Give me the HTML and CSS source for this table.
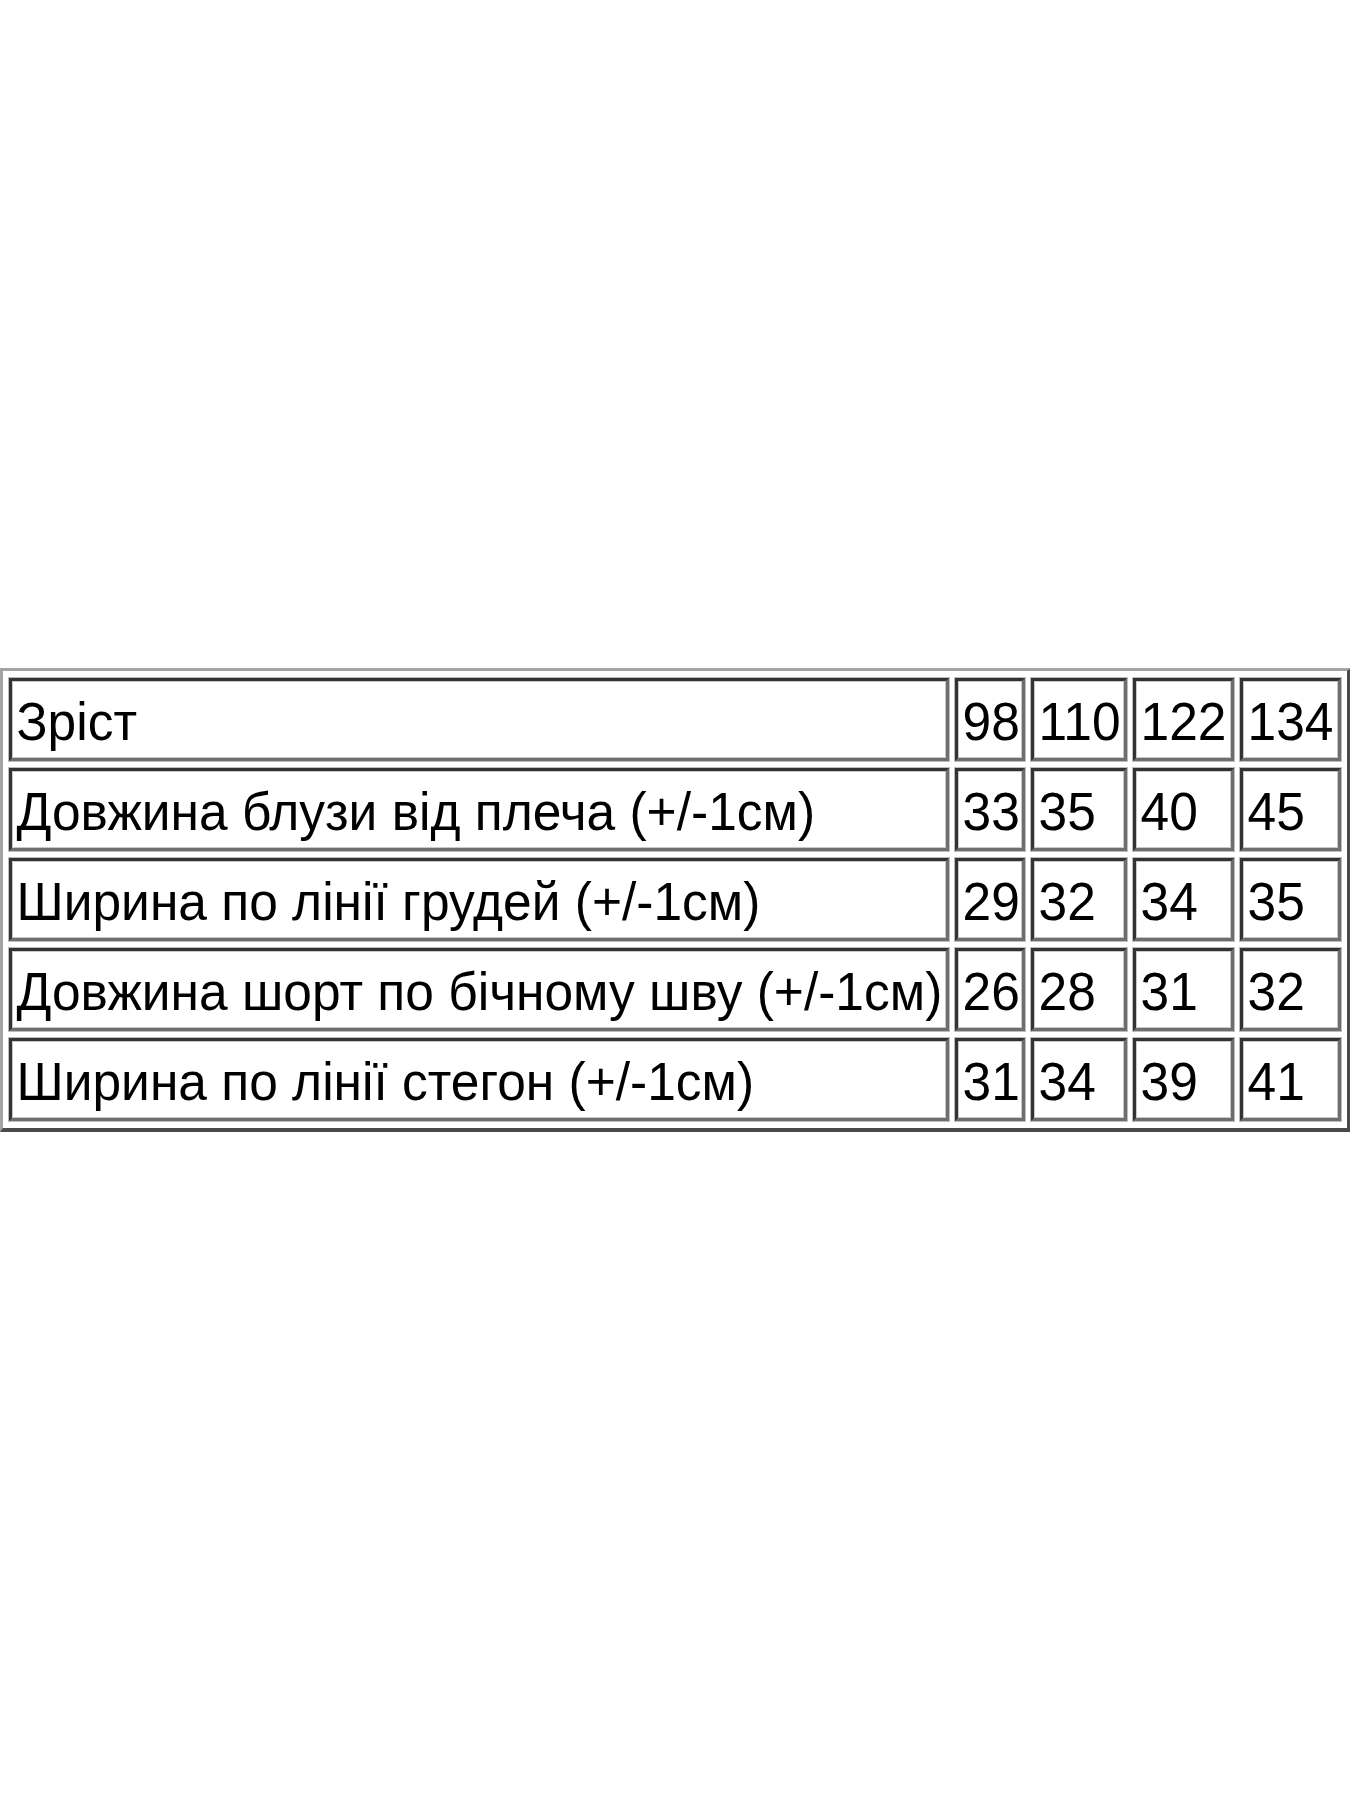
FILE: index.html
```html
<!DOCTYPE html>
<html lang="uk">
<head>
<meta charset="utf-8">
<title>Розмірна сітка</title>
<link rel="stylesheet" href="styles.css">
</head>
<body>
<main class="page">
  <table class="sizes">
    <colgroup>
      <col class="col-label">
      <col class="col-a">
      <col class="col-b">
      <col class="col-c">
      <col class="col-d">
    </colgroup>
    <tbody>
      <tr><td><span class="txt">Зріст</span></td><td><span class="txt">98</span></td><td><span class="txt">110</span></td><td><span class="txt">122</span></td><td><span class="txt">134</span></td></tr>
      <tr><td><span class="txt">Довжина блузи від плеча (+/-1см)</span></td><td><span class="txt">33</span></td><td><span class="txt">35</span></td><td><span class="txt">40</span></td><td><span class="txt">45</span></td></tr>
      <tr><td><span class="txt">Ширина по лінії грудей (+/-1см)</span></td><td><span class="txt">29</span></td><td><span class="txt">32</span></td><td><span class="txt">34</span></td><td><span class="txt">35</span></td></tr>
      <tr><td><span class="txt">Довжина шорт по бічному шву (+/-1см)</span></td><td><span class="txt">26</span></td><td><span class="txt">28</span></td><td><span class="txt">31</span></td><td><span class="txt">32</span></td></tr>
      <tr><td><span class="txt">Ширина по лінії стегон (+/-1см)</span></td><td><span class="txt">31</span></td><td><span class="txt">34</span></td><td><span class="txt">39</span></td><td><span class="txt">41</span></td></tr>
    </tbody>
  </table>
</main>
</body>
</html>
```

FILE: styles.css
```css
html, body {
  margin: 0;
  padding: 0;
  background: #ffffff;
}

.page {
  min-height: 100vh;
  display: flex;
  align-items: center;
  justify-content: center;
}

.sizes {
  width: 1350px;
  table-layout: fixed;
  border-collapse: separate;
  border-spacing: 6px 7px;
  border-style: solid;
  border-width: 3px 4px 4px 3px;
  border-color: #a3a3a3 #4a4a4a #4a4a4a #a3a3a3;
  font-family: "Liberation Sans", Arial, sans-serif;
  color: #000000;
}

.col-label { width: 940px; }
.col-a { width: 70px; }
.col-b { width: 96px; }
.col-c { width: 101px; }
.col-d { width: 101px; }

.sizes td {
  box-sizing: border-box;
  height: 83px;
  padding: 5px 0 0 5px;
  border-style: solid;
  border-width: 3px;
  border-color: #333333 #6e6e6e #6e6e6e #333333;
  box-shadow: 0 0 0 1px #bdbdbd, inset 0 0 0 1px #c8c8c8;
  font-size: 51.5px;
  line-height: 1;
  white-space: nowrap;
  overflow: hidden;
  text-align: left;
  vertical-align: middle;
}

.txt {
  display: inline-block;
  transform: scaleY(1.06);
  transform-origin: left center;
}
```
